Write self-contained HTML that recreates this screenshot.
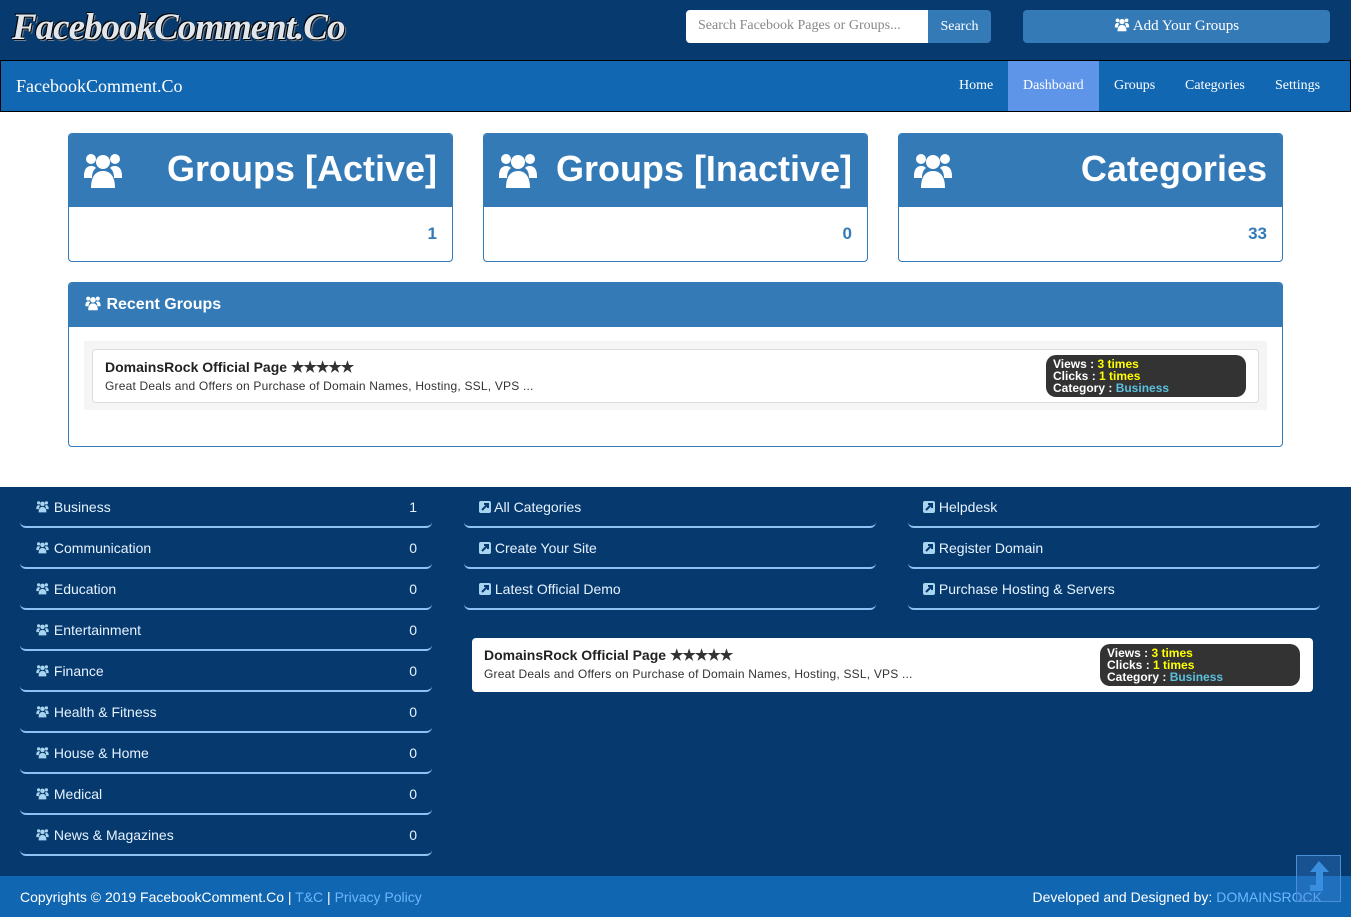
<!DOCTYPE html>
<html><head><meta charset="utf-8"><style>
*{margin:0;padding:0;box-sizing:border-box}
body{width:1351px;height:917px;position:relative;overflow:hidden;background:#fff;font-family:"Liberation Sans",Arial,sans-serif}
.abs{position:absolute}
.hdr{left:0;top:0;width:1351px;height:60px;background:#073a6e}
.logo{left:12px;top:6px;font-family:"Liberation Serif",serif;font-weight:bold;font-style:italic;font-size:37px;color:#dfe6ee;letter-spacing:-1px;text-shadow:1px 1px 0 #000,-1px -1px 0 #000,2px 2px 0 #6b7d90}
.search{left:686px;top:10px;width:242px;height:33px;background:#fff;border-radius:4px 0 0 4px;font-family:"Liberation Serif",serif;font-size:14px;color:#888;padding:8px 12px}
.sbtn{left:928px;top:10px;width:63px;height:33px;background:#337ab7;border-radius:0 4px 4px 0;font-family:"Liberation Serif",serif;font-size:14px;color:#fff;text-align:center;line-height:33px}
.add{left:1023px;top:10px;width:307px;height:33px;background:#337ab7;border-radius:4px;font-family:"Liberation Serif",serif;font-size:15px;color:#fff;text-align:center;line-height:33px}
.nav{left:0;top:60px;width:1351px;height:52px;background:#1167b1;border:1px solid #000}
.brand{left:16px;top:76px;font-family:"Liberation Serif",serif;font-size:18px;color:#fff}
.ni{top:61px;height:50px;line-height:50px;font-family:"Liberation Serif",serif;font-size:14px;color:#fff;padding:0 15px}
.card{width:385px;height:129px;border:1px solid #337ab7;border-radius:4px;top:133px;overflow:hidden}
.card .h{height:73px;background:#337ab7;position:relative}
.card .t{position:absolute;right:15px;top:14px;font-size:36px;font-weight:bold;color:#fff}
.card .n{position:absolute;right:15px;top:90px;font-size:17px;font-weight:bold;color:#337ab7}
.card svg{position:absolute;left:14px;top:16px}
.panel{left:68px;top:282px;width:1215px;height:165px;border:1px solid #337ab7;border-radius:4px;overflow:hidden}
.panel .h{height:44px;background:#337ab7;color:#fff;font-weight:bold;font-size:16px;padding:12px 15px}
.well{left:84px;top:341px;width:1183px;height:69px;background:#f5f5f5}
.item{background:#fff;border:1px solid #ddd;border-radius:4px}
.it1{font-size:14px;color:#222;font-weight:bold}
.it1 b{font-size:15px;letter-spacing:-1px;color:#333}
.it2{font-size:12px;color:#333;margin-top:3px;letter-spacing:0.2px}
.badge{background:#333;border-radius:10px;color:#fff;font-weight:bold;font-size:12px;line-height:12px;padding:3px 7px;width:200px;height:42px}
.y{color:#ff0}.bl{color:#5bc0de}
.foot{left:0;top:487px;width:1351px;height:389px;background:#063a6e}
.row{height:41px;border-bottom:2px solid #8fc1f2;border-radius:0 0 6px 6px;color:#e6f2ff;font-size:14px;padding:12px 15px;position:relative}
.row .c{position:absolute;right:15px;top:12px}
.col{position:absolute;top:487px;width:412px}
.bot{left:0;top:876px;width:1351px;height:41px;background:#1166b1;color:#fff;font-size:14px}
.lk{color:#6ab7ff}
</style></head><body>
<svg width="0" height="0" style="position:absolute"><defs>
<symbol id="g" viewBox="0 0 40 40"><circle cx="8" cy="9" r="5"/><circle cx="32" cy="9" r="5"/><circle cx="20" cy="12" r="7"/><path d="M1 26c0-7 3-10 7-10 3 0 4 1 5 2-3 2-4 6-4 10H1z"/><path d="M39 26c0-7-3-10-7-10-3 0-4 1-5 2 3 2 4 6 4 10h8z"/><path d="M8 38c0-12 5-17 12-17s12 5 12 17z"/></symbol>
<symbol id="x" viewBox="0 0 12 12"><rect width="12" height="12" rx="2" fill="#a8d4f0"/><path d="M3 9L8.5 3.5M5 3h4v4" stroke="#063a6e" stroke-width="2" fill="none"/></symbol>
</defs></svg>

<div class="abs hdr"></div>
<div class="abs logo">FacebookComment.Co</div>
<div class="abs search">Search Facebook Pages or Groups...</div>
<div class="abs sbtn">Search</div>
<div class="abs add"><svg width="16" height="15" fill="#fff" style="vertical-align:-2px"><use href="#g"/></svg> Add Your Groups</div>

<div class="abs nav"></div>
<div class="abs brand">FacebookComment.Co</div>
<div class="abs ni" style="left:944px">Home</div>
<div class="abs ni" style="left:1008px;width:91px;background:#5f95e8">Dashboard</div>
<div class="abs ni" style="left:1099px">Groups</div>
<div class="abs ni" style="left:1170px">Categories</div>
<div class="abs ni" style="left:1260px">Settings</div>

<div class="abs card" style="left:68px"><div class="h"><svg width="40" height="40" fill="#fff"><use href="#g"/></svg><div class="t">Groups [Active]</div></div><div class="n">1</div></div>
<div class="abs card" style="left:483px"><div class="h"><svg width="40" height="40" fill="#fff"><use href="#g"/></svg><div class="t">Groups [Inactive]</div></div><div class="n">0</div></div>
<div class="abs card" style="left:898px"><div class="h"><svg width="40" height="40" fill="#fff"><use href="#g"/></svg><div class="t">Categories</div></div><div class="n">33</div></div>

<div class="abs panel"><div class="h"><svg width="18" height="16" fill="#fff" style="vertical-align:-2px"><use href="#g"/></svg> Recent Groups</div></div>
<div class="abs well"></div>
<div class="abs item" style="left:92px;top:349px;width:1167px;height:54px;padding:8px 12px">
<div class="it1">DomainsRock Official Page <b>★★★★★</b></div><div class="it2">Great Deals and Offers on Purchase of Domain Names, Hosting, SSL, VPS ...</div></div>
<div class="abs badge" style="left:1046px;top:355px">Views : <span class="y">3 times</span><br>Clicks : <span class="y">1 times</span><br>Category : <span class="bl">Business</span></div>

<div class="abs foot"></div>
<div class="col" style="left:20px">
<div class="row"><svg width="15" height="13" fill="#a8d4f0" style="vertical-align:-1px"><use href="#g"/></svg> Business<span class="c">1</span></div>
<div class="row"><svg width="15" height="13" fill="#a8d4f0" style="vertical-align:-1px"><use href="#g"/></svg> Communication<span class="c">0</span></div>
<div class="row"><svg width="15" height="13" fill="#a8d4f0" style="vertical-align:-1px"><use href="#g"/></svg> Education<span class="c">0</span></div>
<div class="row"><svg width="15" height="13" fill="#a8d4f0" style="vertical-align:-1px"><use href="#g"/></svg> Entertainment<span class="c">0</span></div>
<div class="row"><svg width="15" height="13" fill="#a8d4f0" style="vertical-align:-1px"><use href="#g"/></svg> Finance<span class="c">0</span></div>
<div class="row"><svg width="15" height="13" fill="#a8d4f0" style="vertical-align:-1px"><use href="#g"/></svg> Health &amp; Fitness<span class="c">0</span></div>
<div class="row"><svg width="15" height="13" fill="#a8d4f0" style="vertical-align:-1px"><use href="#g"/></svg> House &amp; Home<span class="c">0</span></div>
<div class="row"><svg width="15" height="13" fill="#a8d4f0" style="vertical-align:-1px"><use href="#g"/></svg> Medical<span class="c">0</span></div>
<div class="row"><svg width="15" height="13" fill="#a8d4f0" style="vertical-align:-1px"><use href="#g"/></svg> News &amp; Magazines<span class="c">0</span></div>
</div>
<div class="col" style="left:464px">
<div class="row"><svg width="12" height="12" style="vertical-align:-1px"><use href="#x"/></svg> All Categories</div>
<div class="row"><svg width="12" height="12" style="vertical-align:-1px"><use href="#x"/></svg> Create Your Site</div>
<div class="row"><svg width="12" height="12" style="vertical-align:-1px"><use href="#x"/></svg> Latest Official Demo</div>
</div>
<div class="col" style="left:908px">
<div class="row"><svg width="12" height="12" style="vertical-align:-1px"><use href="#x"/></svg> Helpdesk</div>
<div class="row"><svg width="12" height="12" style="vertical-align:-1px"><use href="#x"/></svg> Register Domain</div>
<div class="row"><svg width="12" height="12" style="vertical-align:-1px"><use href="#x"/></svg> Purchase Hosting &amp; Servers</div>
</div>
<div class="abs item" style="left:472px;top:638px;width:841px;height:54px;padding:8px 12px;border:0">
<div class="it1">DomainsRock Official Page <b>★★★★★</b></div><div class="it2">Great Deals and Offers on Purchase of Domain Names, Hosting, SSL, VPS ...</div></div>
<div class="abs badge" style="left:1100px;top:644px">Views : <span class="y">3 times</span><br>Clicks : <span class="y">1 times</span><br>Category : <span class="bl">Business</span></div>

<div class="abs bot"></div>
<div class="abs" style="left:20px;top:889px;color:#fff;font-size:14px">Copyrights © 2019 FacebookComment.Co | <span class="lk">T&amp;C</span> | <span class="lk">Privacy Policy</span></div>
<div class="abs" style="right:29px;top:889px;color:#fff;font-size:14px">Developed and Designed by: <span class="lk">DOMAINSROCK</span></div>
<div class="abs" style="left:1296px;top:855px;width:45px;height:47px;border:1px solid #4a8fd8;background:rgba(60,130,210,0.35)">
<svg width="45" height="47" viewBox="0 0 45 47"><path d="M22 5l-9 11h6v13h-6v6h13V16h6z" fill="#3a8ee0"/></svg></div>
</body></html>
